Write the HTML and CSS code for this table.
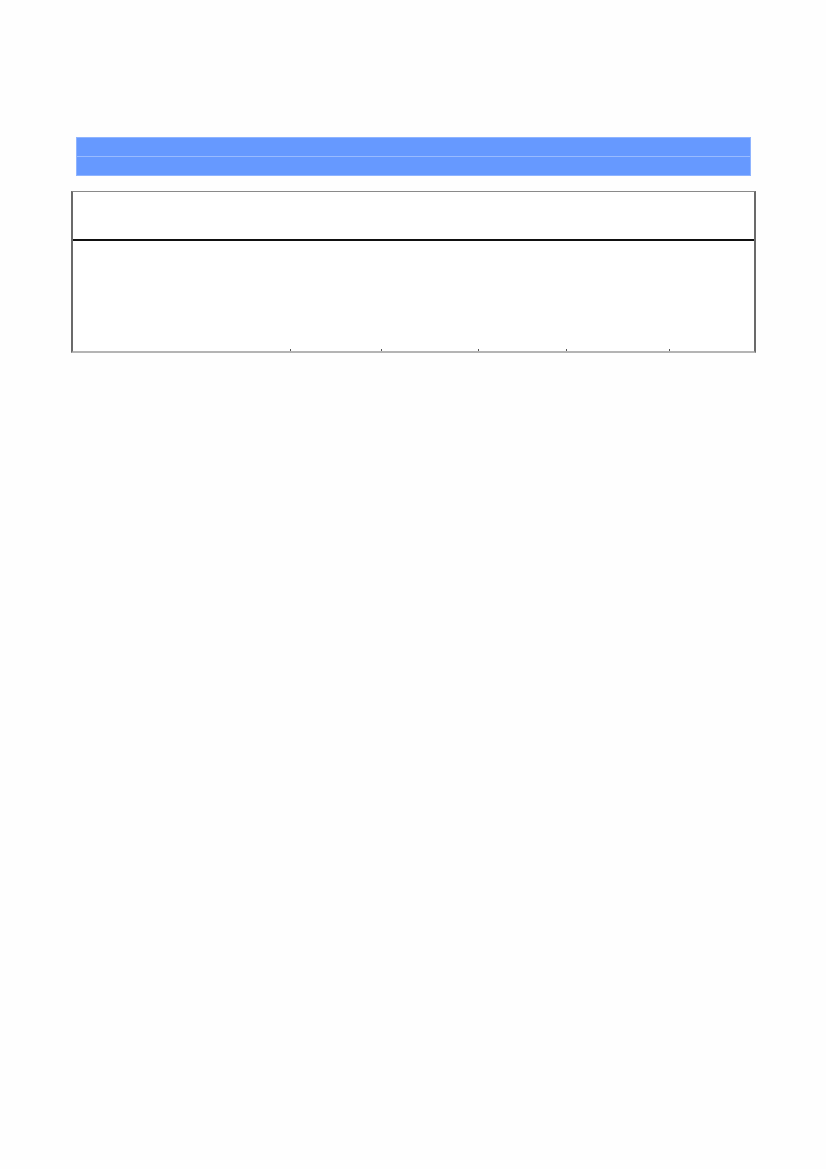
FILE: index.html
```html
<!DOCTYPE html>
<html>
<head>
    <meta charset="utf-8">
    <title></title>
<link rel="stylesheet" href="styles.css">
</head>
<body>
<div class="page">
    <div class="banner">
        <div class="banner-row"></div>
        <div class="banner-row"></div>
    </div>

    <div class="sheet">
        <div class="sheet-head"></div>
        <div class="sheet-body"></div>
        <div class="ticks">
            <span class="c1"></span>
            <span class="c2"></span>
            <span class="c3"></span>
            <span class="c4"></span>
            <span class="c5"></span>
            <span class="c6"></span>
        </div>
    </div>
</div>
</body>
</html>
```

FILE: styles.css
```css
*
{
  margin: 0;
  padding: 0;
  box-sizing: border-box;
}

body
{
  font-family: 'Liberation Sans', sans-serif;
  background: #fefefe;
}

div.page
{
  padding-top: 137px;
  padding-left: 71px;
  width: 826px;
}

div.banner
{
  margin-left: 5px;
  width: 675px;
  background: #6699ff;
  border: 1px solid #8fb4ff;
}

div.banner-row
{
  height: 18px;
}

div.banner-row + div.banner-row
{
  border-top: 1px solid #99bbff;
  height: 19px;
}

div.sheet
{
  margin-top: 15px;
  width: 685px;
  border-top: 1px solid #8a8a8a;
  border-left: 2px solid #6a6a6a;
  border-right: 2px solid #6a6a6a;
  border-bottom: 2px solid #b4b4b4;
  background: #ffffff;
}

div.sheet-head
{
  height: 49px;
  border-bottom: 2px solid #111111;
}

div.sheet-body
{
  height: 108px;
}

div.ticks
{
  display: flex;
  height: 2px;
}

div.ticks span
{
  height: 2px;
}

div.ticks span + span
{
  border-left: 1px solid #555555;
}

.c1 { width: 217px; }
.c2 { width: 91px; }
.c3 { width: 97px; }
.c4 { width: 88px; }
.c5 { width: 103px; }
.c6 { flex: 1; }
```
